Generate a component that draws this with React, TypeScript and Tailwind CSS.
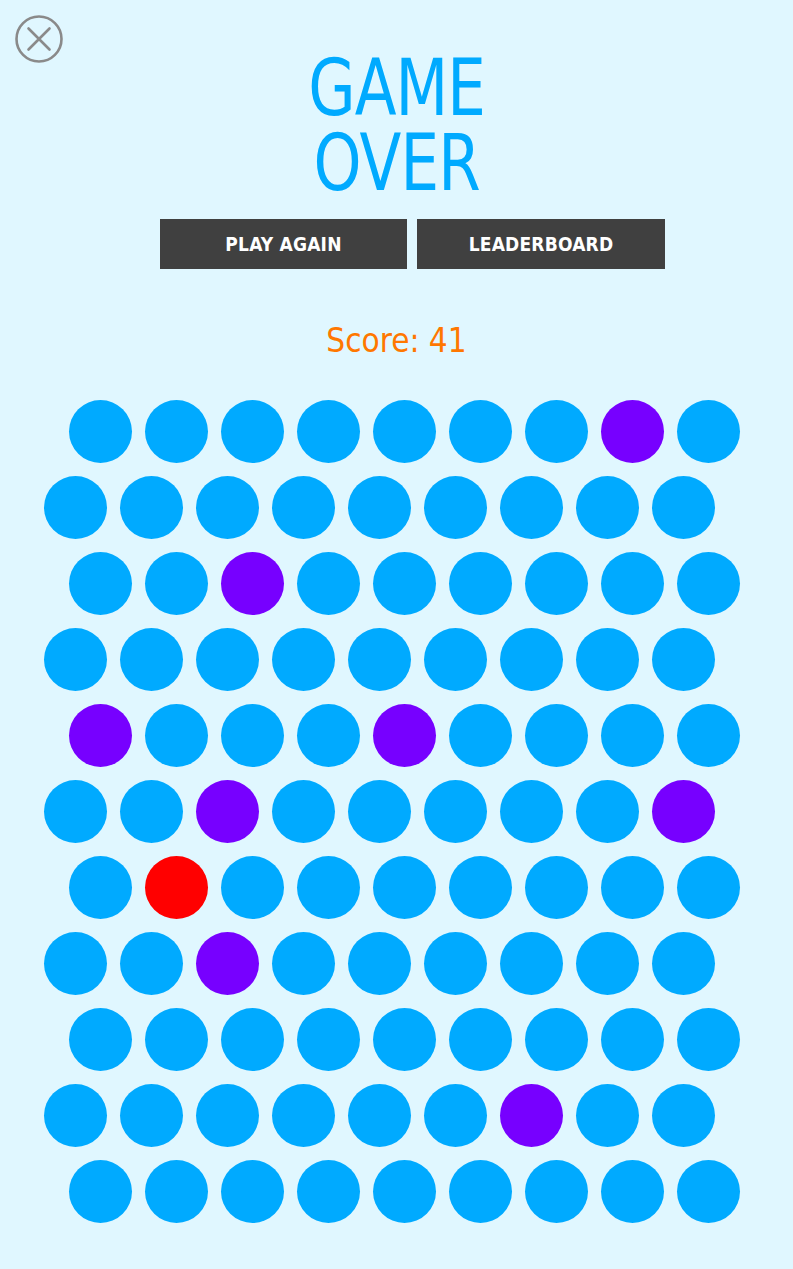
const grid: string[] = [
  "bbbbbbbpb",
  "bbbbbbbbb",
  "bbpbbbbbb",
  "bbbbbbbbb",
  "pbbbpbbbb",
  "bbpbbbbbp",
  "brbbbbbbb",
  "bbpbbbbbb",
  "bbbbbbbbb",
  "bbbbbbpbb",
  "bbbbbbbbb",
];

const dotColor: Record<string, string> = {
  b: "bg-[#00aaff]",
  p: "bg-[#7700ff]",
  r: "bg-[#ff0000]",
};

const font = { fontFamily: '"DejaVu Sans Condensed", "Liberation Sans", sans-serif' };

export default function App() {
  return (
    <div className="relative w-[793px] h-[1269px] bg-[#e0f7ff] overflow-hidden" style={font}>
      <button className="absolute left-[15px] top-[15px] w-[48px] h-[48px]" aria-label="Close">
        <svg width="48" height="48" viewBox="0 0 48 48" fill="none" stroke="#8a8a8a" strokeWidth="2.6" strokeLinecap="round">
          <circle cx="24" cy="24" r="22.5" />
          <path d="M13.5 13.5 L34.5 34.5 M34.5 13.5 L13.5 34.5" />
        </svg>
      </button>

      <div className="flex flex-col items-center">
        <h1 className="mt-[51px] text-[78px] leading-[75px] text-[#00aaff] text-center scale-x-[0.87] tracking-[-1px]">
          GAME
          <br />
          OVER
        </h1>

        <div className="mt-[18px] self-start ml-[160px] flex gap-[10px]">
          <button className="w-[247px] h-[50px] bg-[#404040] text-white font-bold text-[19px] tracking-[0.2px]">
            PLAY AGAIN
          </button>
          <button className="w-[248px] h-[50px] bg-[#404040] text-white font-bold text-[19px] tracking-[0.2px]">
            LEADERBOARD
          </button>
        </div>

        <p className="mt-[52px] text-[33px] leading-[40px] text-[#ff7700]">Score: 41</p>
      </div>

      <div className="mt-[39px] pl-[44px] flex flex-col gap-[13px]">
        {grid.map((row, i) => (
          <div key={i} className={`flex gap-[13px] ${i % 2 === 0 ? "pl-[25px]" : ""}`}>
            {row.split("").map((c, j) => (
              <div key={j} className={`w-[63px] h-[63px] rounded-full ${dotColor[c]}`} />
            ))}
          </div>
        ))}
      </div>
    </div>
  );
}
